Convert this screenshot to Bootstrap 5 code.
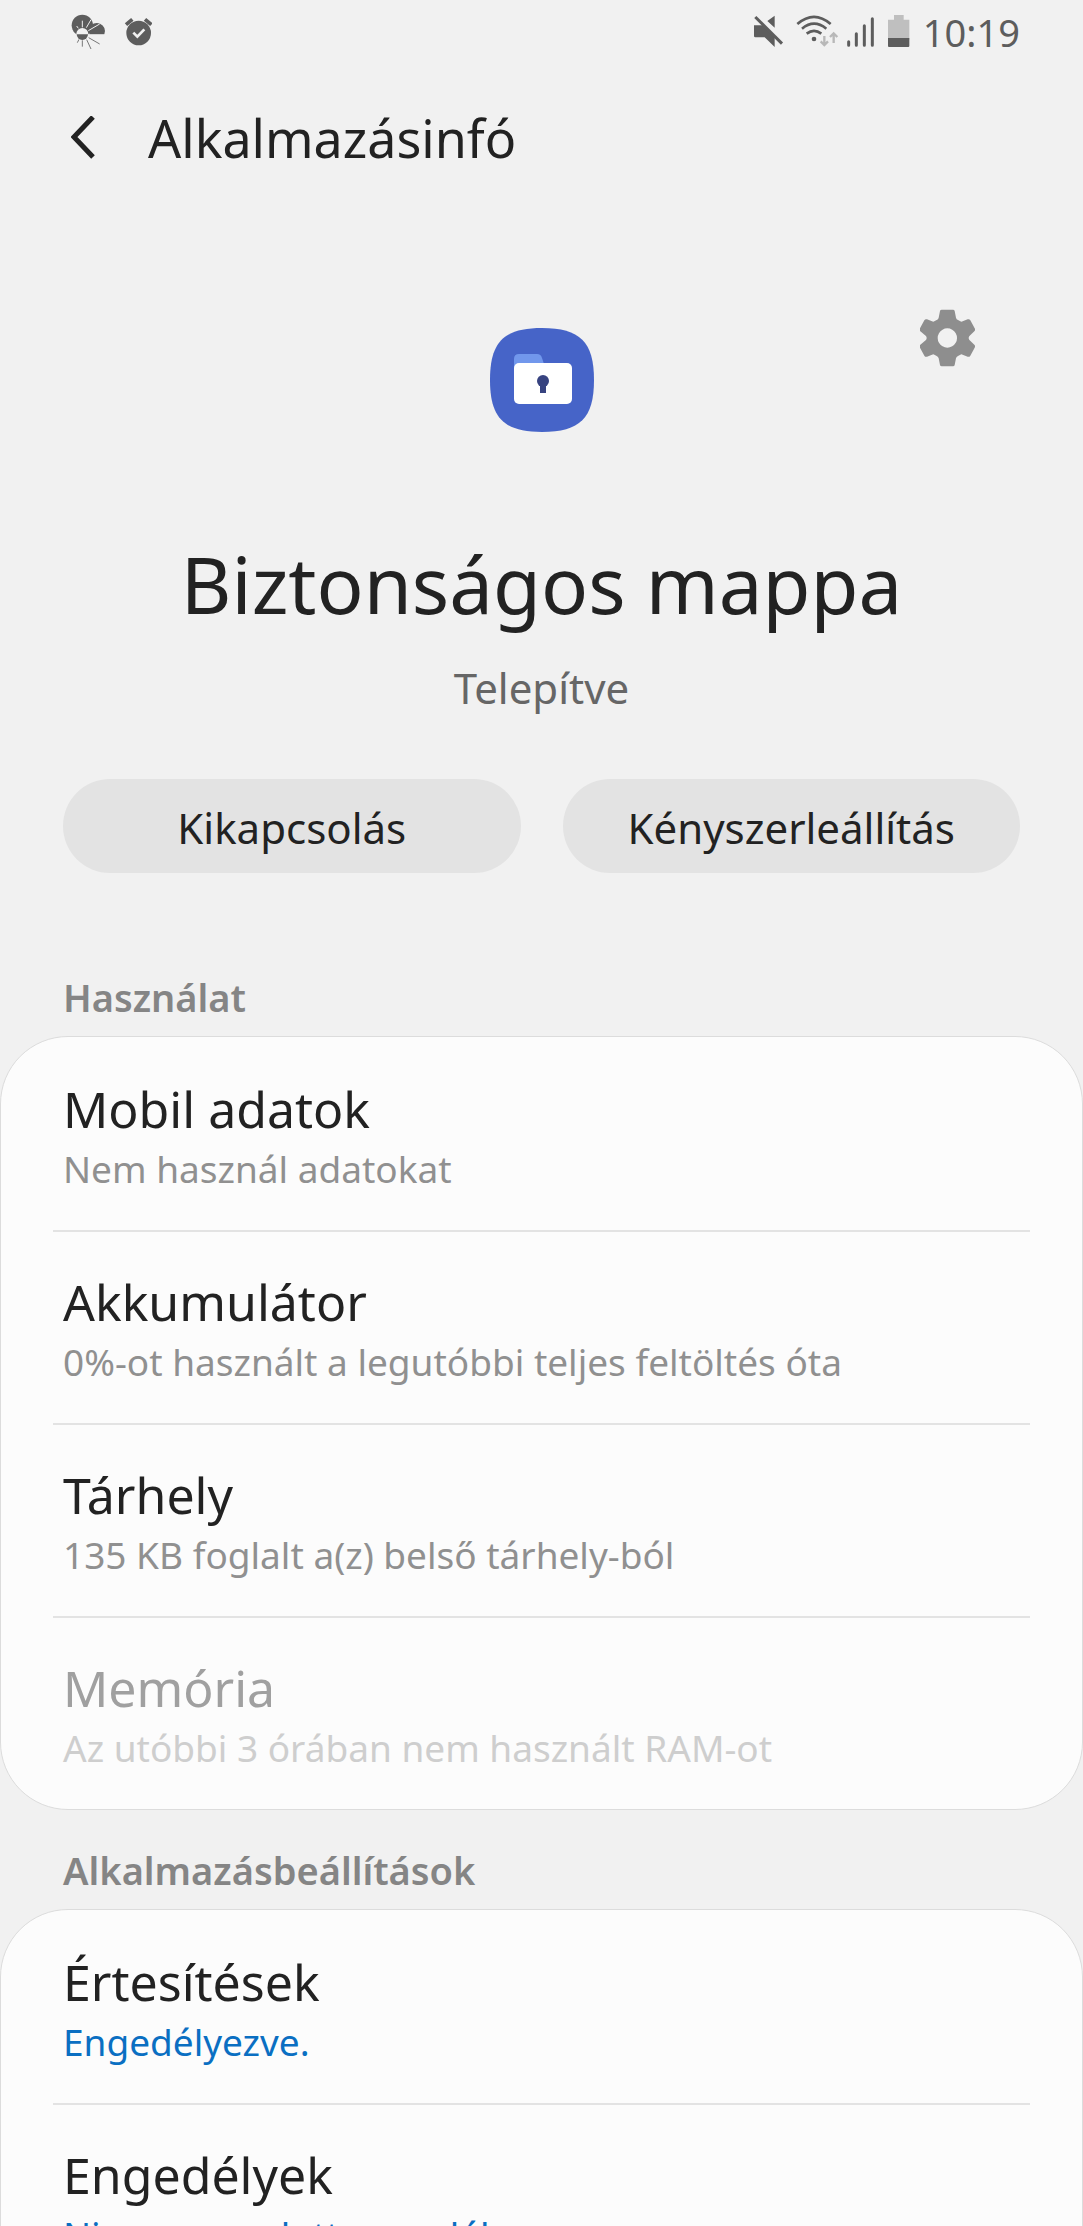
<!DOCTYPE html>
<html lang="hu">
<head>
<meta charset="utf-8">
<meta name="viewport" content="width=device-width, initial-scale=1">
<title>Alkalmazásinfó</title>
<link href="https://cdn.jsdelivr.net/npm/bootstrap@5.3.0/dist/css/bootstrap.min.css" rel="stylesheet">
<style>
  body { background: #f1f1f1; color: #222; font-family: "Noto Sans", "Open Sans", sans-serif; }
  svg { display: block; flex: none; }
  .status-bar { height: 66px; padding: 8px 63px 0 71px; color: #5d5d5d; }
  .status-icons { height: 48px; }
  .clock { font-size: 38px; line-height: 48px; }
  .app-bar { padding: 36px 63px 0 71px; gap: 53px; }
  .app-bar h1 { font-size: 52px; line-height: 72px; }
  .app-hero { padding-top: 135px; }
  .app-logo { margin-top: 19px; }
  .gear-cell { padding-right: 108px; }
  .app-name { font-size: 78px; line-height: 104px; margin-top: 100px; }
  .app-state { font-size: 42px; line-height: 60px; margin-top: 22px; color: #666; }
  .actions { margin: 61px 63px 64px; gap: 42px; }
  .btn-soft { --bs-btn-bg: #e3e3e3; --bs-btn-color: #222; --bs-btn-hover-bg: #d8d8d8; --bs-btn-active-bg: #d0d0d0;
    height: 94px; font-size: 42px; line-height: 60px; padding: 8px 12px 5px; flex: 1 1 0; border: 0; }
  .group-title { font-size: 38px; line-height: 50px; padding: 35px 63px 14px; color: #858585; font-weight: 600; }
  .pane { background: #fcfcfc; border: 1px solid #dcdcdc; border-radius: 68px; }
  .pane-row { color: #222; padding: 0 52px; }
  .pane-row > span { padding: 40px 10px 31px; border-top: 2px solid #e3e3e3; }
  .pane-row:first-child > span { border-top-color: transparent; }
  .row-title { font-size: 50px; line-height: 60px; }
  .row-note { font-size: 37px; line-height: 60px; color: #909090; }
  .row-note.is-on { color: #0a6fc2; }
  .is-off .row-title { color: #a0a0a0; }
  .is-off .row-note { color: #cecece; }
</style>
</head>
<body>
<div class="vh-100 overflow-hidden">
  <div class="status-bar d-flex justify-content-between">
    <div class="status-icons d-flex">
      <svg width="53" height="48" viewBox="63 24 159 144" aria-hidden="true">
        <g fill="#5d5d5d"><circle cx="97" cy="76" r="32"/><path d="M118 103V84a24 24 0 1 1 45 19z"/></g>
        <path fill="#f1f1f1" d="M63 104h105v10H63z"/>
        <path stroke="#f1f1f1" stroke-width="3" d="M97 62v20M123 59l-14 24M149 72l-34 20M80 78l5 7"/>
        <path stroke="#777" stroke-width="3" d="M97 121v19M110 119l13 28M116 113l33 19M87 118l-5 10"/>
        <circle cx="97" cy="102" r="18" fill="#f1f1f1"/>
        <path fill="#5d5d5d" d="M80 103h34a17 17 0 0 1-34 0z"/>
      </svg>
      <svg width="28" height="48" viewBox="222 24 84 144" aria-hidden="true">
        <circle cx="266" cy="99" r="37" fill="#5d5d5d"/>
        <path stroke="#5d5d5d" stroke-width="11" d="M228 74l19-16M285 58l19 16"/>
        <path fill="none" stroke="#f1f1f1" stroke-width="8" d="M250 98l12 12 21-22"/>
      </svg>
    </div>
    <div class="d-flex">
      <svg width="42" height="48" viewBox="69 24 126 144" aria-hidden="true">
        <path fill="#5d5d5d" d="M72 76h26l36 36v29l-30-29H76q-4 0-4-4zM134 47v36l-22-20z"/>
        <path stroke="#f1f1f1" stroke-width="6" d="M83 45l80 80"/>
        <path stroke="#5d5d5d" stroke-width="9" d="M76 51l80 80"/>
      </svg>
      <svg width="51" height="48" viewBox="195 24 153 144" aria-hidden="true">
        <g fill="none" stroke="#5d5d5d" stroke-width="8"><path d="M202 72q50-43 100 0M216 86q36-30 73 0M230 101q22-17 44 0"/></g>
        <circle cx="252" cy="117" r="7" fill="#5d5d5d"/>
        <path fill="none" stroke="#b8b8b8" stroke-width="7" d="M283 108v26M272 124l11 11 11-11M311 129v-27M300 111l11-11 11 11"/>
      </svg>
      <svg width="40" height="48" viewBox="348 24 120 144" aria-hidden="true">
        <path stroke="#5d5d5d" stroke-width="9" stroke-linecap="round" d="M356 125v11M379 101v35M403 77v59M427 56v80"/>
      </svg>
      <svg width="37" height="48" viewBox="468 24 111 144" aria-hidden="true">
        <path fill="#bfbfbf" d="M492 45h29v14h17v60h-64V59h18z"/>
        <path fill="#5d5d5d" d="M474 114h64v24q0 3-3 3h-58q-3 0-3-3z"/>
      </svg>
      <span class="clock">10:19</span>
    </div>
  </div>

  <header class="app-bar d-flex align-items-center">
    <button type="button" class="btn p-0 border-0" aria-label="Vissza">
      <svg width="24" height="44" viewBox="0 0 24 44"><path d="M22 1L3 21l19 20" fill="none" stroke="#222" stroke-width="5"/></svg>
    </button>
    <h1 class="m-0 fw-normal">Alkalmazásinfó</h1>
  </header>

  <main>
    <section class="app-hero text-center">
      <div class="row g-0">
        <div class="col-4 offset-4 d-flex justify-content-center">
          <svg class="app-logo" width="104" height="104" viewBox="0 0 104 104" aria-hidden="true">
            <path fill="#4664c8" d="M52 0C90 0 104 14 104 52S90 104 52 104 0 90 0 52 14 0 52 0z"/>
            <path fill="#7197ec" d="M24 44V31q0-5 5-5h18q4 0 5 4l2 6 6 8z"/>
            <rect x="24" y="35" width="58" height="41" rx="5" fill="#fff"/>
            <circle cx="53" cy="53" r="6" fill="#374380"/><path fill="#374380" d="M50 54h6v11h-6z"/>
          </svg>
        </div>
        <div class="col-4 gear-cell d-flex justify-content-end align-items-start">
          <button type="button" class="btn p-0 border-0" aria-label="Beállítások">
            <svg width="55" height="58" viewBox="56 56 165 172">
              <path fill="#8e8e8e" fill-rule="evenodd" d="M121 57h34q4 0 5 4l4 20q1 5 6 7l7 4q3 2 7 0l15-6q5-2 8 3l13 24q3 5-1 9l-14 13q-3 3-3 7t3 7l14 13q4 4 1 9l-13 24q-3 5-8 3l-15-6q-4-2-7 0l-7 4q-5 2-6 7l-4 20q-1 4-5 4h-34q-4 0-5-4l-4-20q-1-5-6-7l-7-4q-3-2-7 0l-15 6q-5 2-8-3l-13-24q-3-5 1-9l16-13q3-3 3-7t-3-7l-16-13q-4-4-1-9l13-24q3-5 8-3l15 6q4 2 7 0l7-4q5-2 6-7l4-20q1-4 5-4zM138 113a29 29 0 1 0 .1 0z"/>
            </svg>
          </button>
        </div>
      </div>
      <h2 class="app-name fw-normal mb-0">Biztonságos mappa</h2>
      <p class="app-state mb-0">Telepítve</p>
      <div class="actions d-flex">
        <button type="button" class="btn btn-soft rounded-pill">Kikapcsolás</button>
        <button type="button" class="btn btn-soft rounded-pill">Kényszerleállítás</button>
      </div>
    </section>

    <h3 class="group-title m-0">Használat</h3>
    <div class="pane">
      <a href="#" class="pane-row d-block text-decoration-none"><span class="d-block"><span class="row-title d-block">Mobil adatok</span><span class="row-note d-block">Nem használ adatokat</span></span></a>
      <a href="#" class="pane-row d-block text-decoration-none"><span class="d-block"><span class="row-title d-block">Akkumulátor</span><span class="row-note d-block">0%-ot használt a legutóbbi teljes feltöltés óta</span></span></a>
      <a href="#" class="pane-row d-block text-decoration-none"><span class="d-block"><span class="row-title d-block">Tárhely</span><span class="row-note d-block">135 KB foglalt a(z) belső tárhely-ból</span></span></a>
      <a class="pane-row is-off d-block text-decoration-none" aria-disabled="true"><span class="d-block"><span class="row-title d-block">Memória</span><span class="row-note d-block">Az utóbbi 3 órában nem használt RAM-ot</span></span></a>
    </div>

    <h3 class="group-title m-0">Alkalmazásbeállítások</h3>
    <div class="pane">
      <a href="#" class="pane-row d-block text-decoration-none"><span class="d-block"><span class="row-title d-block">Értesítések</span><span class="row-note is-on d-block">Engedélyezve.</span></span></a>
      <a href="#" class="pane-row d-block text-decoration-none"><span class="d-block"><span class="row-title d-block">Engedélyek</span><span class="row-note is-on d-block">Nincs megadott engedély</span></span></a>
    </div>
  </main>
</div>
<script src="https://cdn.jsdelivr.net/npm/bootstrap@5.3.0/dist/js/bootstrap.bundle.min.js"></script>
</body>
</html>
